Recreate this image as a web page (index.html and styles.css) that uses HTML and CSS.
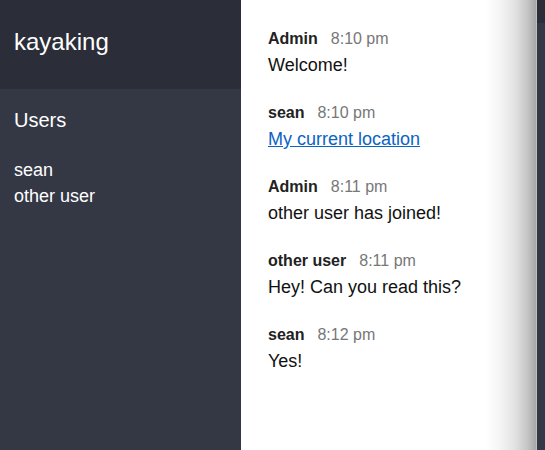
FILE: index.html
```html
<!DOCTYPE html>
<html>
<head>
<meta charset="utf-8">
<link rel="stylesheet" href="styles.css">
</head>
<body>
<div class="app">
  <aside class="sidebar">
    <div class="room">kayaking</div>
    <div class="users">
      <div class="users-title">Users</div>
      <ul class="user-list">
        <li>sean</li>
        <li>other user</li>
      </ul>
    </div>
  </aside>
  <main class="chat">
    <div class="message">
      <div class="meta"><span class="name">Admin</span><span class="time">8:10 pm</span></div>
      <div class="text">Welcome!</div>
    </div>
    <div class="message">
      <div class="meta"><span class="name">sean</span><span class="time">8:10 pm</span></div>
      <div class="text"><a class="link" href="#">My current location</a></div>
    </div>
    <div class="message">
      <div class="meta"><span class="name">Admin</span><span class="time">8:11 pm</span></div>
      <div class="text">other user has joined!</div>
    </div>
    <div class="message">
      <div class="meta"><span class="name">other user</span><span class="time">8:11 pm</span></div>
      <div class="text">Hey! Can you read this?</div>
    </div>
    <div class="message">
      <div class="meta"><span class="name">sean</span><span class="time">8:12 pm</span></div>
      <div class="text">Yes!</div>
    </div>
  </main>
  <div class="edge">
    <div class="edge-top"></div>
    <div class="edge-body"></div>
  </div>
</div>
</body>
</html>
```

FILE: styles.css
```css
html, body {
  margin: 0;
  padding: 0;
  height: 100%;
}
body {
  font-family: "Liberation Sans", Arial, sans-serif;
  background: #fff;
}
.app {
  display: flex;
  height: 450px;
  overflow: hidden;
}
.sidebar {
  width: 241px;
  flex: none;
  background: #343845;
  color: #fff;
  display: flex;
  flex-direction: column;
}
.room {
  height: 89px;
  box-sizing: border-box;
  background: #2b2e39;
  font-size: 24px;
  line-height: 28px;
  padding: 28px 14px 0;
}
.users {
  padding: 17px 14px 0;
}
.users-title {
  font-size: 20px;
  line-height: 28px;
}
.user-list {
  list-style: none;
  margin: 23px 0 0;
  padding: 0;
  font-size: 18px;
  line-height: 26px;
}
.chat {
  flex: 1;
  padding: 27px 0 0 27px;
  background: linear-gradient(to right, #ffffff 0, #ffffff calc(100% - 52px), #f6f6f6 calc(100% - 38px), #e2e2e2 calc(100% - 22px), #c6c6c6 calc(100% - 10px), #a6a6a6 calc(100% - 1px), #d8d8d8 100%);
}
.message {
  margin-bottom: 22px;
}
.meta {
  font-size: 16px;
  line-height: 24px;
}
.name {
  font-weight: bold;
  color: #222;
  margin-right: 13px;
}
.time {
  color: #777;
}
.text {
  font-size: 18px;
  line-height: 28px;
  color: #111;
}
.link {
  color: #0b63c5;
  text-decoration: underline;
}
.edge {
  width: 8px;
  flex: none;
  display: flex;
  flex-direction: column;
}
.edge-top {
  height: 23px;
  background: #2b2e39;
}
.edge-body {
  flex: 1;
  background: #343845;
}
```
